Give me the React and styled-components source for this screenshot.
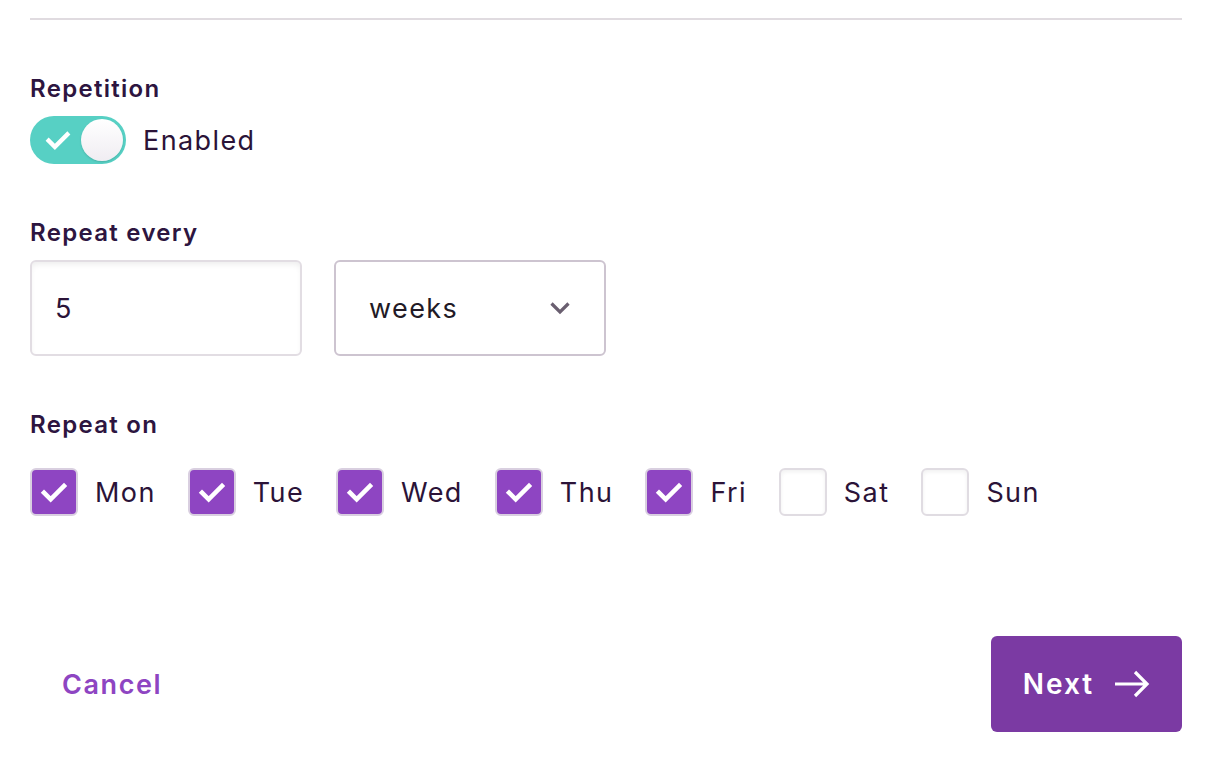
import React from "react";
import styled, { createGlobalStyle } from "styled-components";

const Global = createGlobalStyle`
  html, body { margin: 0; padding: 0; background: #fff; }
  body { font-family: "Inter", "Noto Sans", sans-serif; color: #2b1338; }
  * { box-sizing: border-box; }
`;

const Page = styled.div`
  padding: 18px 50px 0 30px;
  display: flex;
  flex-direction: column;
`;

const Divider = styled.hr`
  margin: 0;
  border: 0;
  height: 2px;
  background: #e0dbe0;
`;

const Section = styled.section`
  display: flex;
  flex-direction: column;
  margin-top: ${(p) => p.$top}px;
  gap: ${(p) => p.$gap}px;
`;

const Label = styled.div`
  font-size: 24px;
  line-height: 30px;
  font-weight: 600;
  letter-spacing: 1.3px;
  color: #2d1540;
`;

const ToggleRow = styled.div`
  display: flex;
  align-items: center;
  gap: 17px;
`;

const Toggle = styled.div`
  position: relative;
  width: 96px;
  height: 48px;
  border-radius: 24px;
  background: #57d0c4;
  display: flex;
  align-items: center;
  padding-left: 13px;
`;

const Knob = styled.div`
  position: absolute;
  right: 3px;
  top: 3px;
  width: 42px;
  height: 42px;
  border-radius: 50%;
  background: linear-gradient(180deg, #ffffff 0%, #f0edf2 100%);
  box-shadow: 0 1px 2px rgba(0, 0, 0, 0.15);
`;

const BodyText = styled.span`
  font-size: 27px;
  letter-spacing: 1.4px;
  color: #2b1338;
  font-weight: 400;
`;

const FieldRow = styled.div`
  display: flex;
  gap: 32px;
`;

const Input = styled.div`
  width: 272px;
  height: 96px;
  border: 2px solid #e2dde3;
  border-radius: 6px;
  box-shadow: inset 0 4px 6px -2px rgba(0, 0, 0, 0.08);
  display: flex;
  align-items: center;
  padding-left: 23px;
  font-size: 27px;
  color: #2b1338;
`;

const Select = styled.div`
  width: 272px;
  height: 96px;
  border: 2px solid #cdc4d0;
  border-radius: 6px;
  display: flex;
  align-items: center;
  justify-content: space-between;
  padding: 0 33px 0 33px;
  font-size: 27px;
  letter-spacing: 1.4px;
  color: #221a26;
`;

const DayRow = styled.div`
  display: flex;
  align-items: center;
  gap: 32px;
`;

const Day = styled.label`
  display: flex;
  align-items: center;
  gap: 17px;
`;

const Box = styled.span`
  width: 48px;
  height: 48px;
  border-radius: 6px;
  border: 2px solid ${(p) => (p.$checked ? "#d9cfe0" : "#e0dce2")};
  background: ${(p) => (p.$checked ? "#8e45c2" : "#fff")};
  box-shadow: ${(p) => (p.$checked ? "none" : "inset 0 2px 4px rgba(0,0,0,0.06)")};
  display: flex;
  align-items: center;
  justify-content: center;
`;

const Footer = styled.div`
  margin-top: 120px;
  display: flex;
  align-items: center;
  justify-content: space-between;
`;

const CancelButton = styled.button`
  border: 0;
  background: none;
  font-family: inherit;
  font-size: 27px;
  font-weight: 600;
  letter-spacing: 1.6px;
  color: #8e45c2;
  padding: 0 32px;
  height: 96px;
  cursor: pointer;
`;

const NextButton = styled.button`
  width: 191px;
  height: 96px;
  border: 0;
  border-radius: 6px;
  background: #7b3aa3;
  color: #fff;
  font-family: inherit;
  font-size: 28px;
  font-weight: 600;
  letter-spacing: 2px;
  display: flex;
  align-items: center;
  justify-content: center;
  gap: 20px;
  cursor: pointer;
`;

const Check = ({ size = 24 }) => (
  <svg width={size} height={size} viewBox="0 0 24 24" fill="none">
    <path d="M4.5 12.5l5 5L19.5 7.5" stroke="#fff" strokeWidth="3.4" strokeLinecap="square" />
  </svg>
);

const Chevron = () => (
  <svg width="22" height="14" viewBox="0 0 22 14" fill="none">
    <path d="M2.5 2.5l8.5 8.5 8.5-8.5" stroke="#6a5f70" strokeWidth="3.2" />
  </svg>
);

const Arrow = () => (
  <svg width="36" height="28" viewBox="0 0 36 28" fill="none">
    <path d="M1 14h32M21 2l12 12-12 12" stroke="#fff" strokeWidth="3.2" />
  </svg>
);

const days = [
  ["Mon", true],
  ["Tue", true],
  ["Wed", true],
  ["Thu", true],
  ["Fri", true],
  ["Sat", false],
  ["Sun", false],
];

export default function App() {
  return (
    <>
      <Global />
      <Page>
        <Divider />
        <Section $top={54} $gap={12}>
          <Label>Repetition</Label>
          <ToggleRow>
            <Toggle>
              <Check size={30} />
              <Knob />
            </Toggle>
            <BodyText>Enabled</BodyText>
          </ToggleRow>
        </Section>
        <Section $top={54} $gap={12}>
          <Label>Repeat every</Label>
          <FieldRow>
            <Input>5</Input>
            <Select>
              <span>weeks</span>
              <Chevron />
            </Select>
          </FieldRow>
        </Section>
        <Section $top={54} $gap={28}>
          <Label>Repeat on</Label>
          <DayRow>
            {days.map(([d, c]) => (
              <Day key={d}>
                <Box $checked={c}>{c && <Check size={32} />}</Box>
                <BodyText>{d}</BodyText>
              </Day>
            ))}
          </DayRow>
        </Section>
        <Footer>
          <CancelButton>Cancel</CancelButton>
          <NextButton>
            Next
            <Arrow />
          </NextButton>
        </Footer>
      </Page>
    </>
  );
}
